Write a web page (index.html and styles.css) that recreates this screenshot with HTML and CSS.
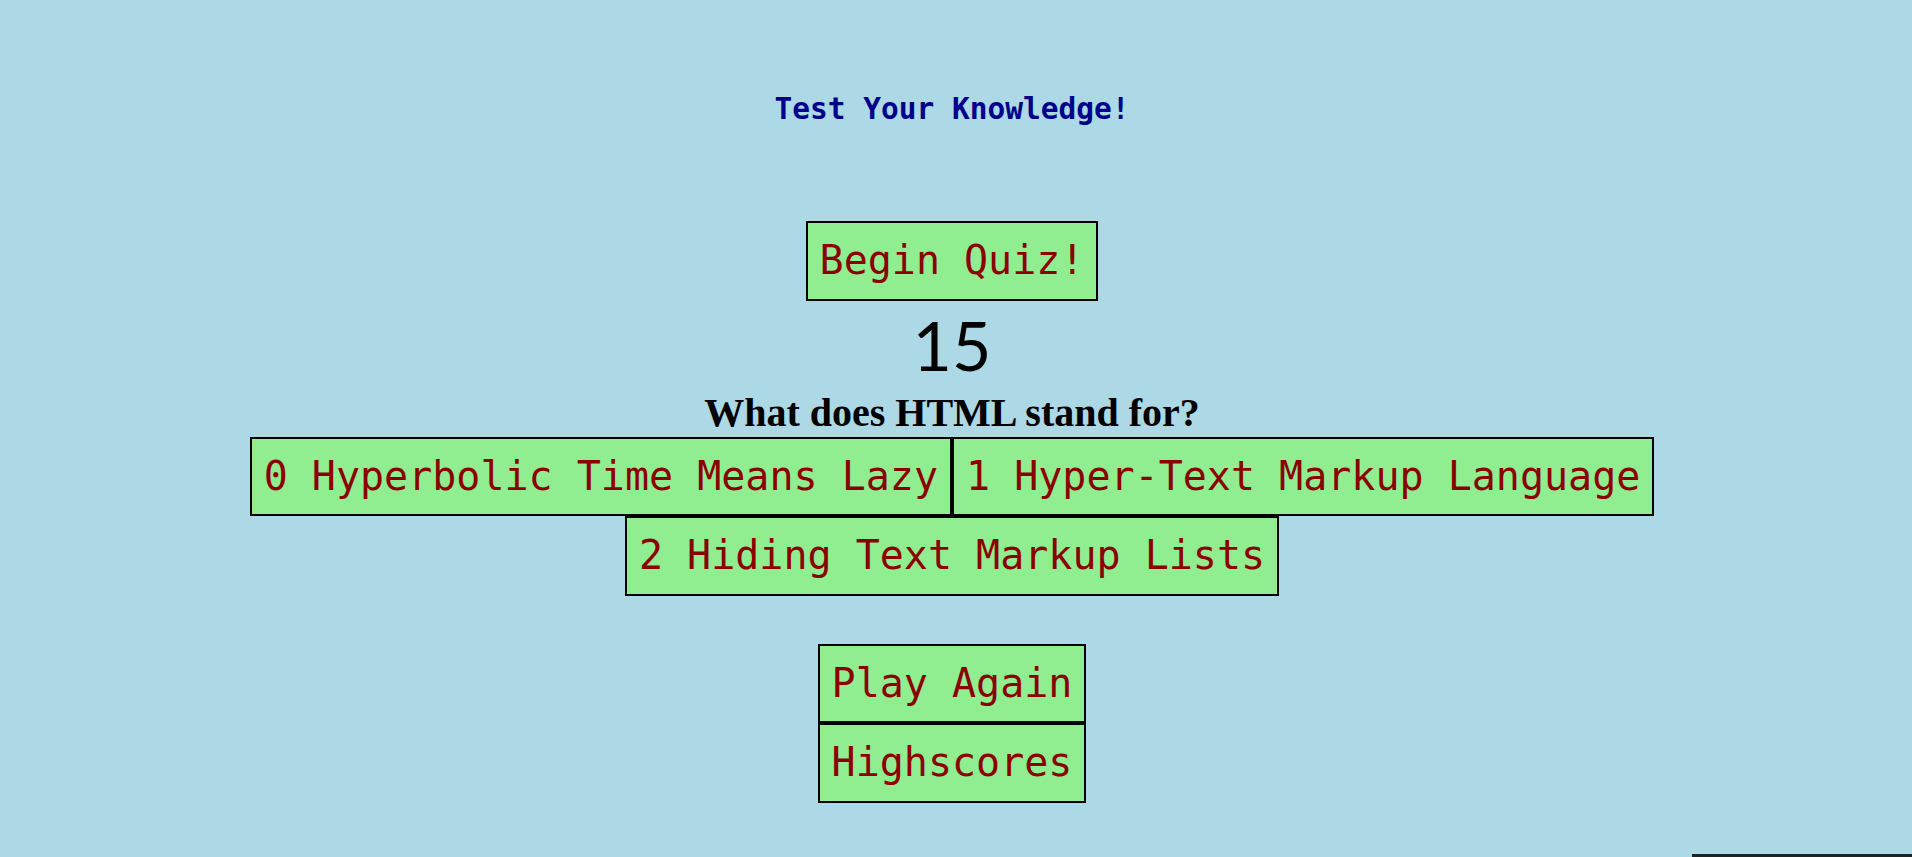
FILE: index.html
```html
<!DOCTYPE html>
<html lang="en">
<head>
<meta charset="utf-8">
<title>Code Quiz</title>
<link rel="stylesheet" href="styles.css">
</head>
<body>
<div class="page">
  <header class="header">
    <h1 class="title">Test Your Knowledge!</h1>
  </header>
  <main class="quiz">
    <button class="btn start-btn" type="button">Begin Quiz!</button>
    <div class="timer">15</div>
    <h2 class="question">What does HTML stand for?</h2>
    <div class="answers">
      <button class="btn answer" type="button">0 Hyperbolic Time Means Lazy</button>
      <button class="btn answer" type="button">1 Hyper-Text Markup Language</button>
      <button class="btn answer" type="button">2 Hiding Text Markup Lists</button>
    </div>
    <div class="controls">
      <button class="btn control" type="button">Play Again</button>
      <button class="btn control" type="button">Highscores</button>
    </div>
  </main>
</div>
<div class="footer-row">
  <div class="footer-bar"></div>
</div>
</body>
</html>
```
FILE: styles.css
```css
html, body {
  margin: 0;
  padding: 0;
}

body {
  background: #add8e6;
  font-family: "DejaVu Sans Mono", "Liberation Mono", monospace;
}

.page {
  padding-right: 8px;
}

.header {
  display: flex;
  justify-content: center;
  padding-top: 92px;
}

.title {
  margin: 0;
  font-family: "DejaVu Sans Mono", monospace;
  font-size: 29.5px;
  line-height: 35px;
  font-weight: bold;
  color: #00008b;
}

.quiz {
  display: flex;
  flex-direction: column;
  align-items: center;
  margin-top: 94px;
}

.btn {
  -webkit-appearance: none;
  appearance: none;
  margin: 0;
  border: 2px solid #000;
  border-radius: 0;
  background: #90ee90;
  color: #8b0000;
  font-family: "DejaVu Sans Mono", "Liberation Mono", monospace;
  font-size: 40px;
  line-height: 47.5px;
  padding: 14px 12px;
  white-space: nowrap;
  cursor: pointer;
}

.timer {
  margin-top: 8px;
  font-family: Lato, "DejaVu Sans", sans-serif;
  font-size: 68px;
  line-height: 72px;
  color: #000;
}

.question {
  margin: 10px 0 0;
  font-family: "Liberation Serif", "Times New Roman", serif;
  font-weight: bold;
  font-size: 40px;
  line-height: 44px;
  color: #000;
}

.answers {
  display: flex;
  flex-wrap: wrap;
  justify-content: center;
  width: 1500px;
  margin-top: 2px;
}

.controls {
  display: flex;
  flex-direction: column;
  margin-top: 48px;
}

.footer-row {
  display: flex;
  justify-content: flex-end;
  margin-top: 51px;
}

.footer-bar {
  width: 220px;
  height: 30px;
  background: #222;
}
```
